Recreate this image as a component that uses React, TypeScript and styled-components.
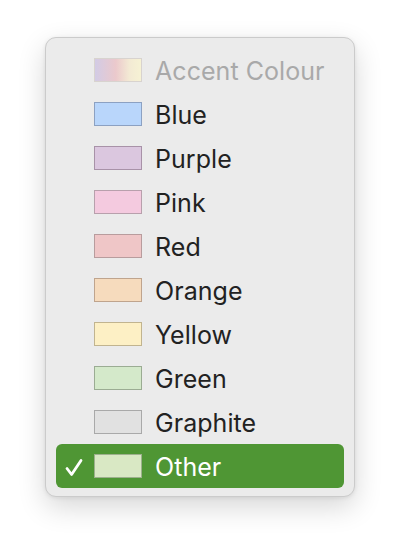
import React from "react";
import styled, { createGlobalStyle } from "styled-components";

const Global = createGlobalStyle`
  html, body { margin: 0; padding: 0; background: #ffffff; }
  body { font-family: Inter, "Noto Sans", "Liberation Sans", sans-serif; }
`;

const Page = styled.div`
  width: 400px;
  height: 552px;
  box-sizing: border-box;
  padding: 37px 0 0 45px;
`;

const Menu = styled.div`
  width: 310px;
  box-sizing: border-box;
  background: #ebebeb;
  border: 1px solid #cbcbcb;
  border-radius: 11px;
  padding: 10px 10px 8px 10px;
  box-shadow: 0 10px 28px rgba(0, 0, 0, 0.16), 0 1px 4px rgba(0, 0, 0, 0.08);
  display: flex;
  flex-direction: column;
`;

const Row = styled.div<{ $selected?: boolean; $disabled?: boolean }>`
  height: 44px;
  display: flex;
  align-items: center;
  border-radius: 6px;
  background: ${(p) => (p.$selected ? "#4f9634" : "transparent")};
  color: ${(p) => (p.$selected ? "#ffffff" : p.$disabled ? "#a9a9a9" : "#222222")};
  font-size: 25px;
  letter-spacing: 0.05px;
`;

const Check = styled.span`
  width: 38px;
  display: flex;
  align-items: center;
  justify-content: center;
  padding-right: 2px;
  padding-top: 2px;
  box-sizing: border-box;
`;

const Swatch = styled.span<{ $fill: string; $border: string }>`
  width: 48px;
  height: 24px;
  box-sizing: border-box;
  border: 1px solid ${(p) => p.$border};
  background: ${(p) => p.$fill};
  margin-right: 13px;
  flex: none;
`;

const Label = styled.span`
  line-height: 1;
  margin-top: 2px;
`;

type Item = { name: string; fill: string; border: string; disabled?: boolean; selected?: boolean };

const items: Item[] = [
  {
    name: "Accent Colour",
    fill: "linear-gradient(90deg, #d2cbe5 0%, #ebc9cc 45%, #f3ead4 75%, #f6f2d4 100%)",
    border: "#d8d3cf",
    disabled: true,
  },
  { name: "Blue", fill: "#b9d6fb", border: "#8ca1c2" },
  { name: "Purple", fill: "#dbc7df", border: "#a892a8" },
  { name: "Pink", fill: "#f4cadf", border: "#b8a0ac" },
  { name: "Red", fill: "#efc6c7", border: "#b89c9d" },
  { name: "Orange", fill: "#f6dbbd", border: "#bfa48d" },
  { name: "Yellow", fill: "#fdf0c5", border: "#c1b48f" },
  { name: "Green", fill: "#d4e9ca", border: "#9bac93" },
  { name: "Graphite", fill: "#e1e1e1", border: "#a9a9a9" },
  { name: "Other", fill: "#d9e8c4", border: "#9db08d", selected: true },
];

const CheckIcon = () => (
  <svg width="18" height="19" viewBox="0 0 18 19" fill="none">
    <path d="M2 10.5 L6.6 16.5 L16 2.5" stroke="#ffffff" strokeWidth="2.8" strokeLinecap="round" strokeLinejoin="round" />
  </svg>
);

export default function App() {
  return (
    <>
      <Global />
      <Page>
        <Menu>
          {items.map((it) => (
            <Row key={it.name} $selected={it.selected} $disabled={it.disabled}>
              <Check>{it.selected ? <CheckIcon /> : null}</Check>
              <Swatch $fill={it.fill} $border={it.border} />
              <Label>{it.name}</Label>
            </Row>
          ))}
        </Menu>
      </Page>
    </>
  );
}
